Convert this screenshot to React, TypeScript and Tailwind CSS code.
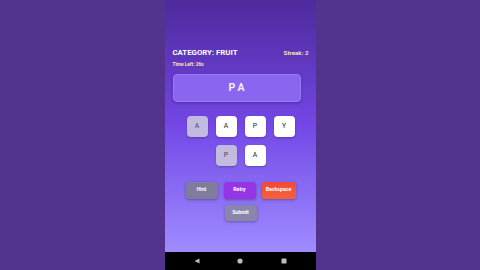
import React from "react";

const tilesTop = [
  { ch: "A", used: true },
  { ch: "A", used: false },
  { ch: "P", used: false },
  { ch: "Y", used: false },
];
const tilesBottom = [
  { ch: "P", used: true },
  { ch: "A", used: false },
];

const Tile = ({ ch, used }: { ch: string; used: boolean }) => (
  <div
    className={`w-[21px] h-[21px] rounded-[4px] flex items-center justify-center text-[6.8px] shadow-[0_1px_2px_rgba(0,0,0,0.25)] ${
      used ? "bg-[#c3badf] text-[#4a4560]" : "bg-white text-[#222]"
    }`}
  >
    {ch}
  </div>
);

export default function App() {
  return (
    <div
      className="w-[480px] h-[270px] bg-[#52348f] flex justify-center overflow-hidden"
      style={{ fontFamily: "Roboto, 'Noto Sans', sans-serif" }}
    >
      <div className="w-[151px] h-full flex flex-col">
        <div className="flex-1 bg-gradient-to-b from-[#4e2a9c] via-[#7447e6] to-[#a08bff] pl-[8px] pr-[7px] pt-[49px] flex flex-col">
          <div className="flex justify-between items-center">
            <span className="text-[7.8px] font-bold text-white leading-none">CATEGORY: FRUIT</span>
            <span className="text-[6.2px] font-bold text-[#ffe0b0] leading-none">Streak: 2</span>
          </div>
          <div className="text-[4.8px] font-bold text-[#ffe4c0] leading-none mt-[6px]">Time Left: 26s</div>

          <div className="mt-[6px] mr-[8px] h-[28px] rounded-[4px] bg-[#8a66f0] border border-[#9a7af5] shadow-[0_1px_3px_rgba(40,10,100,0.4)] flex items-center justify-center">
            <span className="text-[10.5px] font-bold text-[#f3eeff] tracking-[3px] ml-[3px]">PA</span>
          </div>

          <div className="mt-[14px] flex flex-col items-center gap-[8px]">
            <div className="flex gap-[8px]">
              {tilesTop.map((t, i) => (
                <Tile key={i} {...t} />
              ))}
            </div>
            <div className="flex gap-[8px]">
              {tilesBottom.map((t, i) => (
                <Tile key={i} {...t} />
              ))}
            </div>
          </div>

          <div className="mt-[16px] flex flex-col items-center gap-[6px]">
            <div className="flex gap-[6px] text-[5.2px] font-bold text-white">
              <button className="w-[32px] h-[17px] rounded-[3px] bg-[#7f7c9e] shadow-[0_1px_3px_rgba(0,0,0,0.3)]">Hint</button>
              <button className="w-[32px] h-[17px] rounded-[3px] bg-[#9436e6] shadow-[0_1px_3px_rgba(0,0,0,0.3)]">Retry</button>
              <button className="w-[34px] h-[17px] rounded-[3px] bg-gradient-to-b from-[#f04a3c] to-[#f5623a] shadow-[0_1px_3px_rgba(0,0,0,0.3)]">Backspace</button>
            </div>
            <button className="w-[32px] h-[16px] rounded-[3px] bg-[#8a85aa] text-[5.2px] font-bold text-white shadow-[0_1px_3px_rgba(0,0,0,0.3)]">Submit</button>
          </div>
        </div>
        <div className="h-[18px] bg-black flex items-center justify-between px-[29px]">
          <svg width="6" height="6" viewBox="0 0 6 6">
            <polygon points="5.5,0.5 5.5,5.5 0.5,3" fill="#bbb" />
          </svg>
          <svg width="6" height="6" viewBox="0 0 6 6">
            <circle cx="3" cy="3" r="2.6" fill="#bbb" />
          </svg>
          <svg width="6" height="6" viewBox="0 0 6 6">
            <rect x="0.5" y="0.5" width="5" height="5" rx="0.5" fill="#bbb" />
          </svg>
        </div>
      </div>
    </div>
  );
}
